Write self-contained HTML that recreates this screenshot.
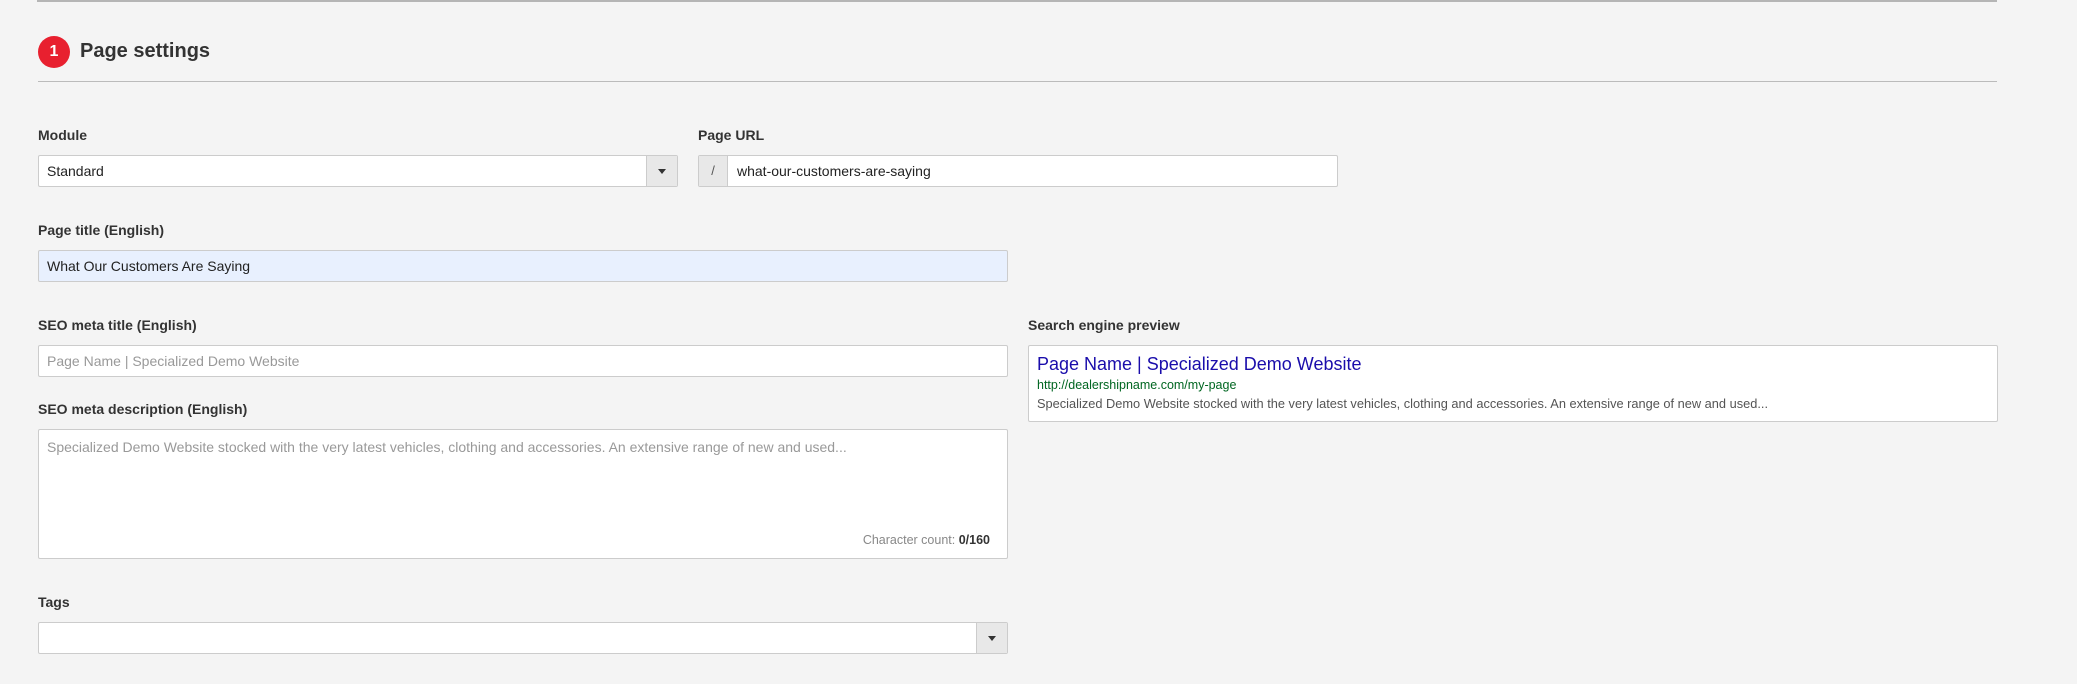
<!DOCTYPE html>
<html><head><meta charset="utf-8"><style>
*{box-sizing:border-box;margin:0;padding:0}
body{width:2077px;height:684px;background:#f4f4f4;font-family:"Liberation Sans",Arial,sans-serif;color:#333;position:relative;overflow:hidden}
.a{position:absolute}
.lbl{position:absolute;font-size:14px;font-weight:bold;color:#333}
.inp{position:absolute;background:#fff;border:1px solid #ccc;border-radius:2px;font-size:14px;color:#222;padding-left:8px;display:flex;align-items:center}
.caret{position:absolute;right:0;top:0;bottom:0;width:31px;background:#e8e8e8;border-left:1px solid #ccc;display:flex;align-items:center;justify-content:center}
.caret:after{content:"";border-left:4px solid transparent;border-right:4px solid transparent;border-top:5px solid #333}
.ph{color:#999}
</style></head><body>
<div class="a" style="left:37px;top:0;width:1960px;height:2px;background:#b5b5b5"></div>
<div class="a" style="left:38px;top:36px;width:32px;height:32px;border-radius:50%;background:#e8202f;color:#fff;font-weight:bold;font-size:16px;text-align:center;line-height:32px">1</div>
<div class="a" style="left:80px;top:40px;font-size:20px;font-weight:bold;color:#333">Page settings</div>
<div class="a" style="left:38px;top:81px;width:1959px;height:1px;background:#bbb"></div>

<div class="lbl" style="left:38px;top:127px">Module</div>
<div class="inp" style="left:38px;top:155px;width:640px;height:32px">Standard<div class="caret"></div></div>
<div class="lbl" style="left:698px;top:127px">Page URL</div>
<div class="inp" style="left:698px;top:155px;width:640px;height:32px;padding-left:38px"><div class="a" style="left:0;top:0;bottom:0;width:29px;background:#e8e8e8;border-right:1px solid #ccc;text-align:center;line-height:30px;font-size:13px;color:#555">/</div>what-our-customers-are-saying</div>

<div class="lbl" style="left:38px;top:222px">Page title (English)</div>
<div class="inp" style="left:38px;top:250px;width:970px;height:32px;background:#e8f0fe">What Our Customers Are Saying</div>

<div class="lbl" style="left:38px;top:317px">SEO meta title (English)</div>
<div class="inp ph" style="left:38px;top:345px;width:970px;height:32px">Page Name | Specialized Demo Website</div>

<div class="lbl" style="left:1028px;top:317px">Search engine preview</div>
<div class="a" style="left:1028px;top:345px;width:970px;height:77px;background:#fff;border:1px solid #ccc;border-radius:2px;padding:8px 8px">
<div style="font-size:18px;color:#1a0dab;line-height:20px">Page Name | Specialized Demo Website</div>
<div style="font-size:12.5px;color:#006621;margin-top:4px">http://dealershipname.com/my-page</div>
<div style="font-size:12.8px;color:#545454;margin-top:4px">Specialized Demo Website stocked with the very latest vehicles, clothing and accessories. An extensive range of new and used...</div>
</div>

<div class="lbl" style="left:38px;top:401px">SEO meta description (English)</div>
<div class="a" style="left:38px;top:429px;width:970px;height:130px;background:#fff;border:1px solid #ccc;border-radius:2px;padding:9px 8px;font-size:14px;color:#999">Specialized Demo Website stocked with the very latest vehicles, clothing and accessories. An extensive range of new and used...
<div class="a" style="right:17px;bottom:11px;font-size:12.5px;color:#888">Character count: <b style="color:#333">0/160</b></div></div>

<div class="lbl" style="left:38px;top:594px">Tags</div>
<div class="inp" style="left:38px;top:622px;width:970px;height:32px"><div class="caret"></div></div>
</body></html>
